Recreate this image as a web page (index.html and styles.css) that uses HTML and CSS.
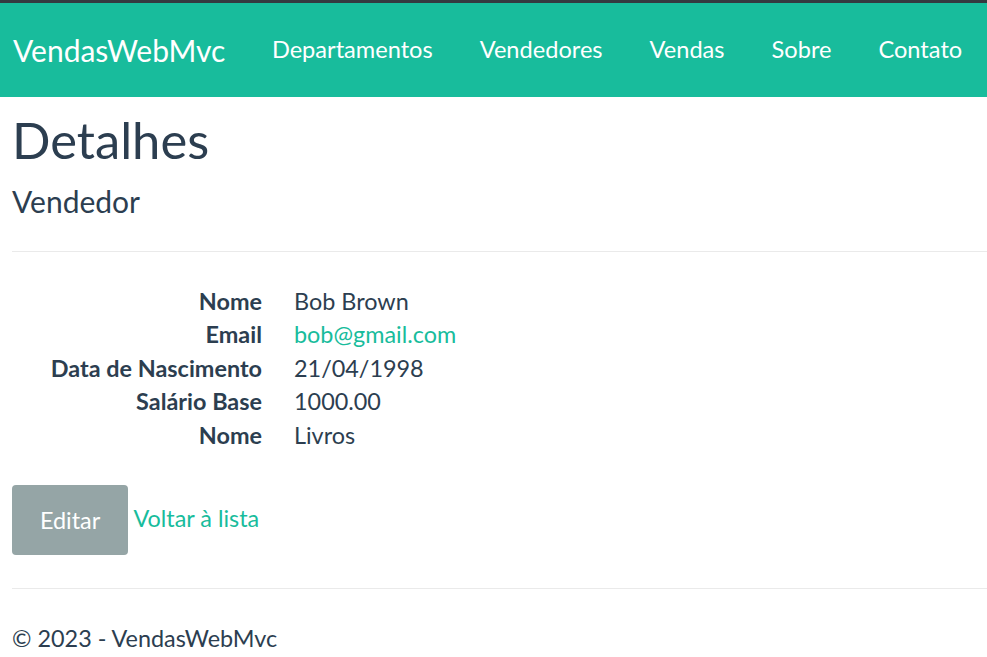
FILE: index.html
```html
<!DOCTYPE html>
<html lang="pt-BR">
<head>
<meta charset="utf-8">
<title>Detalhes - VendasWebMvc</title>
<link rel="stylesheet" href="styles.css">
</head>
<body>
<header class="navbar">
  <a class="brand" href="#">VendasWebMvc</a>
  <nav class="nav">
    <a class="nav-link" href="#">Departamentos</a>
    <a class="nav-link" href="#">Vendedores</a>
    <a class="nav-link" href="#">Vendas</a>
    <a class="nav-link" href="#">Sobre</a>
    <a class="nav-link" href="#">Contato</a>
  </nav>
</header>
<main class="container">
  <h1 class="title">Detalhes</h1>
  <h4 class="subtitle">Vendedor</h4>
  <hr class="rule">
  <dl class="details">
    <dt>Nome</dt><dd>Bob Brown</dd>
    <dt>Email</dt><dd><a class="link" href="#">bob@gmail.com</a></dd>
    <dt>Data de Nascimento</dt><dd>21/04/1998</dd>
    <dt>Salário Base</dt><dd>1000.00</dd>
    <dt>Nome</dt><dd>Livros</dd>
  </dl>
  <div class="actions">
    <a class="btn" href="#">Editar</a> <a class="link back" href="#">Voltar à lista</a>
  </div>
  <hr class="rule">
  <footer class="footer">© 2023 - VendasWebMvc</footer>
</main>
</body>
</html>
```
FILE: styles.css
```css
* { box-sizing: border-box; }
html, body { margin: 0; padding: 0; }
body {
  font-family: Lato, "Open Sans", sans-serif;
  font-size: 23.4px;
  line-height: 33.5px;
  color: #2c3e50;
  background: #fff;
  border-top: 3px solid #343a40;
  overflow: hidden;
}
a { text-decoration: none; }
.navbar {
  display: flex;
  align-items: center;
  height: 94px;
  background: #18bc9c;
  padding: 0 0 0 13px;
}
.brand {
  color: #fff;
  font-size: 30px;
  line-height: 1;
  margin-right: 23px;
  white-space: nowrap;
}
.nav { display: flex; }
.nav-link {
  color: #fff;
  font-size: 23.6px;
  padding: 0 23.5px;
  white-space: nowrap;
}
.container { padding: 0 0 0 12px; }
.title {
  font-size: 50.7px;
  font-weight: 400;
  line-height: 1.2;
  margin: 13px 0 0;
}
.subtitle {
  font-size: 30px;
  font-weight: 400;
  line-height: 1.2;
  margin: 12px 0 0;
}
.rule {
  border: 0;
  border-top: 1px solid #eaeaea;
  margin: 32px 0 0;
}
.details {
  display: grid;
  grid-template-columns: 250px 1fr;
  column-gap: 32px;
  margin: 33px 0 0;
}
.details dt { font-weight: 700; text-align: right; }
.details dd { margin: 0; }
.link { color: #18bc9c; }
.actions { margin: 33px 0 33px; }
.btn {
  display: inline-block;
  background: #95a5a6;
  color: #fff;
  border-radius: 4px;
  padding: 18px 28px;
  line-height: 34px;
}
.back { position: relative; top: -2px; }
.footer { margin-top: 33px; }
```
